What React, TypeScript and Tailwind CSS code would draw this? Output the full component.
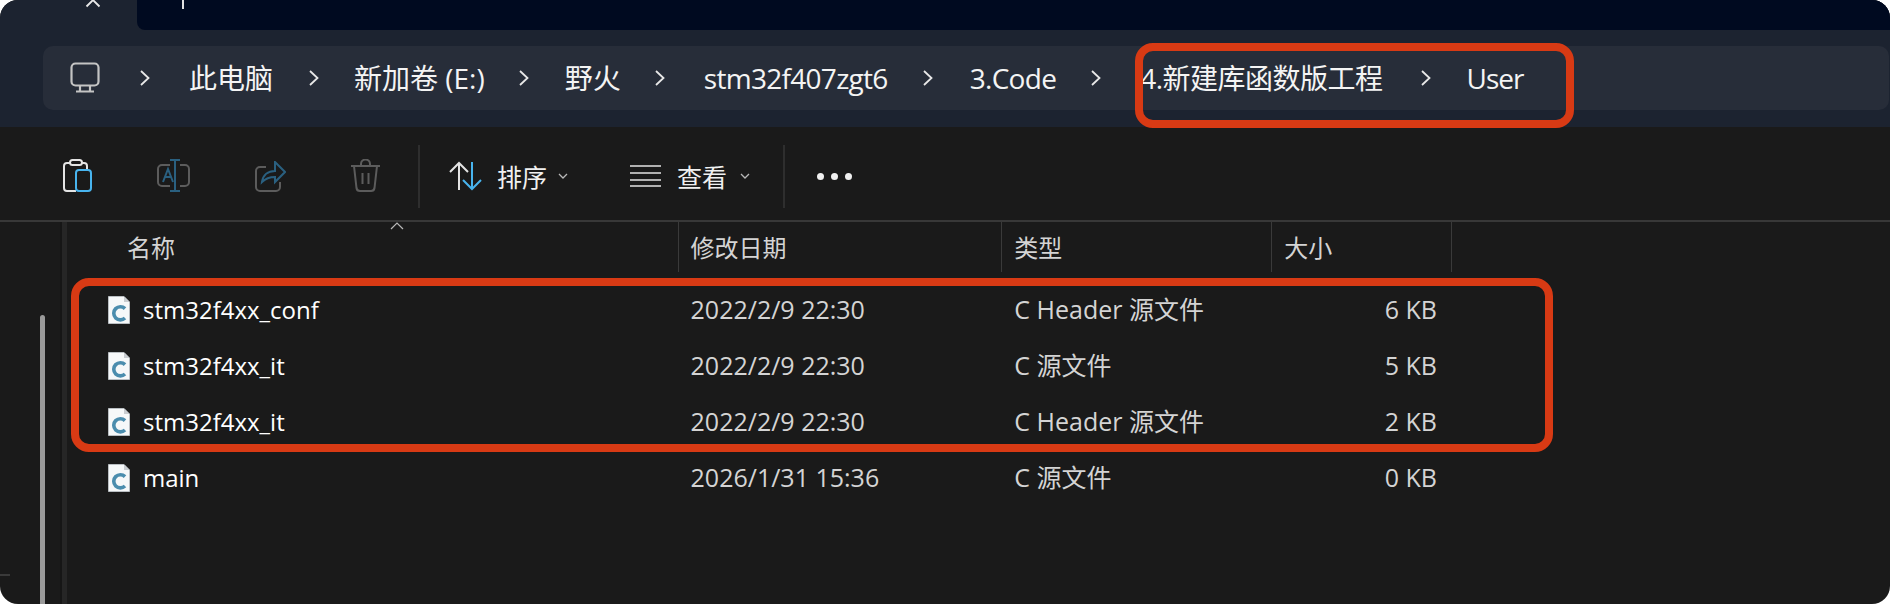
import React from 'react';

const crumbBase = 'text-[28px] text-[#f4f4f4] whitespace-nowrap';

const crumbs = [
  { label: '此电脑', chev: 'ml-[39px]', cls: `ml-[38px] ${crumbBase}` },
  { label: '新加卷 (E:)', chev: 'ml-[35px]', cls: `ml-[34px] ${crumbBase}` },
  { label: '野火', chev: 'ml-[33px]', cls: `ml-[35px] ${crumbBase}` },
  { label: 'stm32f407zgt6', chev: 'ml-[33px]', cls: `ml-[38px] tracking-[-0.7px] ${crumbBase}` },
  { label: '3.Code', chev: 'ml-[34px]', cls: `ml-[36px] tracking-[-0.7px] ${crumbBase}` },
  { label: '4.新建库函数版工程', chev: 'ml-[34px]', cls: `ml-[38px] tracking-[-0.5px] ${crumbBase}` },
  { label: 'User', chev: 'ml-[37px]', cls: `ml-[35px] tracking-[-1px] ${crumbBase}` },
];

const files = [
  { name: 'stm32f4xx_conf', date: '2022/2/9 22:30', type: 'C Header 源文件', size: '6 KB' },
  { name: 'stm32f4xx_it', date: '2022/2/9 22:30', type: 'C 源文件', size: '5 KB' },
  { name: 'stm32f4xx_it', date: '2022/2/9 22:30', type: 'C Header 源文件', size: '2 KB' },
  { name: 'main', date: '2026/1/31 15:36', type: 'C 源文件', size: '0 KB' },
];

function Chevron() {
  return (
    <svg width="12" height="20" viewBox="0 0 12 20" fill="none" stroke="#e8e8e8" strokeWidth="1.8" className="shrink-0">
      <path d="M2 3l7.5 7L2 17" />
    </svg>
  );
}

function Monitor() {
  return (
    <svg width="30" height="31" viewBox="0 0 30 31" fill="none" stroke="#c4c4c4" strokeWidth="2.2" className="shrink-0 mb-[2px]">
      <rect x="1.5" y="1.5" width="27" height="22" rx="4" />
      <path d="M10 24v5M20 24v5M6 29.5h18" />
    </svg>
  );
}

function FileIcon() {
  return (
    <svg width="22" height="28" viewBox="0 0 22 28" className="shrink-0">
      <path d="M0.5 0.5H16L21.5 6V27.5H0.5Z" fill="#f6f8f9" stroke="#b9bec2" />
      <path d="M16 0.5V6H21.5Z" fill="#c8ccd0" />
      <path d="M17 12.6a6.6 6.6 0 1 0 0 9.4" fill="none" stroke="#4b8dae" strokeWidth="3.6" />
    </svg>
  );
}

function Caret() {
  return (
    <svg width="10" height="6" viewBox="0 0 10 6" fill="none" stroke="#b8b8b8" strokeWidth="1.3" className="shrink-0">
      <path d="M1 1l4 4 4-4" />
    </svg>
  );
}

function Toolbar() {
  return (
    <div className="h-[95px] shrink-0 flex items-center border-b-2 border-[#383838] pl-[63px] pt-[5px]">
      <svg width="29" height="34" viewBox="0 0 29 34" fill="none" strokeWidth="2" className="shrink-0">
        <path d="M8 4H4a3 3 0 0 0-3 3v22a3 3 0 0 0 3 3h9" stroke="#e4e4e4" />
        <path d="M19 4h2a3 3 0 0 1 3 3v3" stroke="#e4e4e4" />
        <rect x="7" y="1" width="12" height="5" rx="2.5" stroke="#e4e4e4" />
        <rect x="13" y="11" width="15" height="21" rx="3" stroke="#48b4ee" />
      </svg>
      <svg width="33" height="34" viewBox="0 0 33 34" fill="none" strokeWidth="2" className="ml-[65px] shrink-0">
        <path d="M13 6H5a4 4 0 0 0-4 4v13a4 4 0 0 0 4 4h8M23 6h5a4 4 0 0 1 4 4v13a4 4 0 0 1-4 4h-5" stroke="#5c5c5c" />
        <path d="M18 1v31M13 1h10M13 32h10M6 23l5-13 5 13M8 18h6" stroke="#2a6080" />
      </svg>
      <svg width="31" height="31" viewBox="0 0 31 31" fill="none" strokeWidth="2" className="ml-[65px] shrink-0">
        <path d="M25 21v5a4 4 0 0 1-4 4H5a4 4 0 0 1-4-4V10a4 4 0 0 1 4-4h6" stroke="#5c5c5c" />
        <path d="M20 1l10 10-10 10v-5c-6 0-10 2-13 5 1-7 6-11 13-11z" stroke="#2a6080" />
      </svg>
      <svg width="31" height="34" viewBox="0 0 31 34" fill="none" stroke="#5c5c5c" strokeWidth="2" className="ml-[64px] shrink-0">
        <path d="M1 7h29M11 7V5a4 4 0 0 1 9 0v2M4 7l2.5 22a3.5 3.5 0 0 0 3.5 3h11a3.5 3.5 0 0 0 3.5-3L27 7M12.5 14v11M18.5 14v11" />
      </svg>
      <div className="w-[2px] h-[63px] bg-[#2e2e2e] ml-[37px]" />
      <svg width="33" height="30" viewBox="0 0 33 30" fill="none" strokeWidth="2" className="ml-[29px] shrink-0">
        <path d="M10 29V2M1 11l9-9 9 9" stroke="#e4e4e4" />
        <path d="M23 1v27M14 19l9 9 9-9" stroke="#48b4ee" />
      </svg>
      <span className="ml-[15px] mt-[3px] text-[25px] text-[#f0f0f0]">排序</span>
      <span className="ml-[11px]"><Caret /></span>
      <svg width="31" height="24" viewBox="0 0 31 24" fill="none" stroke="#e4e4e4" strokeWidth="1.6" className="ml-[62px] shrink-0">
        <path d="M0 2h31M0 9h31M0 16h31M0 22h31" />
      </svg>
      <span className="ml-[16px] mt-[3px] text-[25px] text-[#f0f0f0]">查看</span>
      <span className="ml-[13px]"><Caret /></span>
      <div className="w-[2px] h-[63px] bg-[#2e2e2e] ml-[33px]" />
      <div className="flex gap-[7px] ml-[32px]">
        <div className="w-[7px] h-[7px] rounded-full bg-[#f0f0f0]" />
        <div className="w-[7px] h-[7px] rounded-full bg-[#f0f0f0]" />
        <div className="w-[7px] h-[7px] rounded-full bg-[#f0f0f0]" />
      </div>
    </div>
  );
}

function Breadcrumb() {
  return (
    <div className="h-[64px] ml-[43px] mr-[1px] mt-[16px] rounded-[10px] bg-[#272d39] flex items-center pl-[27px]">
      <Monitor />
      {crumbs.map((c, i) => (
        <React.Fragment key={i}>
          <span className={c.chev}><Chevron /></span>
          <span className={c.cls}>{c.label}</span>
        </React.Fragment>
      ))}
    </div>
  );
}

export default function App() {
  return (
    <div className="h-[604px] w-[1890px] bg-white font-['Open_Sans','Noto_Sans_CJK_SC',sans-serif] overflow-hidden">
      <div className="relative h-full rounded-[18px] overflow-hidden bg-[#1a1a1a] flex flex-col">
        {/* title bar + address bar */}
        <div className="h-[127px] bg-[#1c2330] shrink-0">
          <div className="h-[30px] flex">
            <div className="w-[137px] shrink-0 flex justify-end">
              <svg width="20" height="8" viewBox="0 0 20 8" fill="none" stroke="#e8e8e8" strokeWidth="1.8" className="mr-[32px]">
                <path d="M1.5 6.5L8 0l6.5 6.5" />
              </svg>
            </div>
            <div className="flex-1 bg-[#000a20] rounded-bl-[8px] pl-[45px]">
              <div className="w-[2px] h-[9px] bg-[#e0e0e0]" />
            </div>
          </div>
          <Breadcrumb />
        </div>
        <Toolbar />
        {/* body */}
        <div className="flex-1 flex min-h-0">
          <div className="w-[60px] shrink-0 flex justify-end pr-[15px] pt-[93px]">
            <div className="w-[5px] h-full rounded-t-[3px] bg-[#9a9a9a]" />
          </div>
          <div className="w-[2px] shrink-0 bg-[#161616]" />
          <div className="w-[5px] shrink-0 bg-[#262626]" />
          <div className="flex-1 min-w-0">
            <div className="relative h-[50px] flex w-[1385px] text-[24px] text-[#d4d4d4] leading-[52px]">
              <div className="w-[612px] pl-[60px] border-r border-[#3a3a3a]">名称</div>
              <div className="w-[324px] pl-[12px] border-r border-[#3a3a3a]">修改日期</div>
              <div className="w-[270px] pl-[12px] border-r border-[#3a3a3a]">类型</div>
              <div className="w-[180px] pl-[12px] border-r border-[#3a3a3a]">大小</div>
              <svg width="14" height="8" viewBox="0 0 14 8" fill="none" stroke="#b8b8b8" strokeWidth="1.2" className="absolute left-[323px] top-[0px]">
                <path d="M1 7l6-6 6 6" />
              </svg>
            </div>
            <div className="pt-[10px]">
              {files.map((f, i) => (
                <div key={i} className="h-[56px] flex items-center w-[1385px]">
                  <div className="w-[612px] pl-[41px] flex items-center gap-[13px] text-[24px] text-white">
                    <FileIcon />
                    <span>{f.name}</span>
                  </div>
                  <div className="w-[324px] pl-[12px] text-[25px] text-[#d4d4d4]">{f.date}</div>
                  <div className="w-[270px] pl-[12px] text-[25px] text-[#d4d4d4]">{f.type}</div>
                  <div className="w-[180px] pr-[15px] text-right text-[25px] text-[#d4d4d4]">{f.size}</div>
                </div>
              ))}
            </div>
          </div>
        </div>
        {/* red annotation boxes */}
        <div className="absolute left-[1135px] top-[43px] w-[439px] h-[85px] rounded-[18px] border-[8px] border-[#d83a14]" />
        <div className="absolute left-[71px] top-[278px] w-[1482px] h-[174px] rounded-[18px] border-[8px] border-[#d83a14]" />
        <div className="absolute left-0 top-[574px] w-[10px] h-[2px] bg-[#3a3a3a]" />
      </div>
    </div>
  );
}
